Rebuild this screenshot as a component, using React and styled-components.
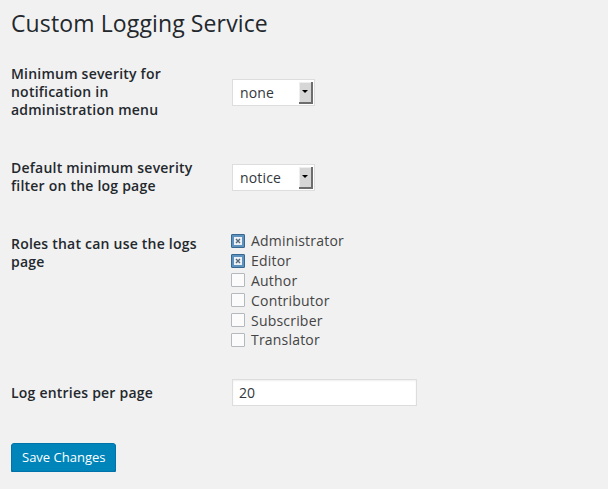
import React from 'react'
import styled, { createGlobalStyle } from 'styled-components'

const Global = createGlobalStyle`
  html, body { margin: 0; background: #f1f1f1; }
  body { font-family: "Open Sans", "Liberation Sans", sans-serif; color: #444; }
`

const Wrap = styled.div`
  padding: 0 11px;
`

const Title = styled.h1`
  margin: 0 0 7px;
  padding-top: 9px;
  font-size: 23px;
  line-height: 29px;
  font-weight: 400;
  letter-spacing: 0.12px;
  color: #23282d;
`

const Row = styled.div`
  display: grid;
  grid-template-columns: 221px 1fr;
`

const Label = styled.div`
  width: 200px;
  padding: 20px 0;
  font-size: 14px;
  line-height: 18px;
  font-weight: 600;
  letter-spacing: 0.22px;
  color: #23282d;
`

const Field = styled.div`
  padding: ${p => (p.$top ? '16px 0 14px' : '15px 0')};
  align-self: ${p => (p.$top ? 'start' : 'center')};
`

const Select = styled.div`
  display: flex;
  width: 83px;
  height: 27px;
  box-sizing: border-box;
  border: 1px solid #ddd;
  background: #fff;
  padding: 1px 1px 1px 0;
`

const SelectText = styled.span`
  flex: 1;
  padding-left: 7px;
  font-size: 14px;
  line-height: 24px;
  letter-spacing: 0.15px;
  color: #32373c;
`

const Arrow = styled.span`
  width: 12px;
  margin-top: 1px;
  background: #d6d6d6;
  border-right: 2px solid #6d6d6d;
  border-bottom: 2px solid #6d6d6d;
  box-shadow: inset 1px 1px 0 #eee;
  display: flex;
  align-items: center;
  justify-content: center;
  &::after {
    content: '';
    border-left: 3px solid transparent;
    border-right: 3px solid transparent;
    border-top: 3px solid #000;
  }
`

const CheckList = styled.div`
  display: flex;
  flex-direction: column;
`

const CheckRow = styled.label`
  display: flex;
  align-items: center;
  gap: 6px;
  height: 19.8px;
  font-size: 14px;
  letter-spacing: 0.2px;
  color: #444;
`

const Box = styled.span`
  width: 14px;
  height: 14px;
  box-sizing: border-box;
  margin-left: -1px;
  border: 1px solid ${p => (p.$on ? '#3a6790' : '#b4b9be')};
  background: ${p => (p.$on ? '#5f93bf' : '#fbfbfb')};
  border-radius: 1px;
  display: flex;
  align-items: center;
  justify-content: center;
`

const Inner = styled.span`
  width: 8px;
  height: 8px;
  background: #eef2f6;
  display: flex;
  align-items: center;
  justify-content: center;
`

const TextInput = styled.input`
  width: 185px;
  height: 27px;
  box-sizing: border-box;
  border: 1px solid #ddd;
  box-shadow: inset 0 1px 2px rgba(0, 0, 0, 0.07);
  background: #fff;
  padding: 0 6px;
  font-family: inherit;
  font-size: 14px;
  color: #32373c;
  outline: none;
`

const Submit = styled.div`
  padding-top: 21px;
`

const Button = styled.button`
  height: 29px;
  padding: 0 10px;
  border: 1px solid #0073aa;
  border-radius: 3px;
  background: #0085ba;
  box-shadow: 0 1px 0 #006799;
  color: #fff;
  font-family: inherit;
  font-size: 13px;
  line-height: 26px;
`

function Check({ on, children }) {
  return (
    <CheckRow>
      <Box $on={on}>
        {on && (
          <Inner>
            <svg width="6" height="6" viewBox="0 0 6 6">
              <path d="M1 1L5 5M5 1L1 5" stroke="#55687a" strokeWidth="1.4" />
            </svg>
          </Inner>
        )}
      </Box>
      {children}
    </CheckRow>
  )
}

function Dropdown({ value }) {
  return (
    <Select>
      <SelectText>{value}</SelectText>
      <Arrow />
    </Select>
  )
}

export default function App() {
  return (
    <Wrap>
      <Global />
      <Title>Custom Logging Service</Title>

      <Row>
        <Label>Minimum severity for notification in administration menu</Label>
        <Field><Dropdown value="none" /></Field>
      </Row>

      <Row>
        <Label>Default minimum severity filter on the log page</Label>
        <Field><Dropdown value="notice" /></Field>
      </Row>

      <Row>
        <Label>Roles that can use the logs page</Label>
        <Field $top>
          <CheckList>
            <Check on>Administrator</Check>
            <Check on>Editor</Check>
            <Check>Author</Check>
            <Check>Contributor</Check>
            <Check>Subscriber</Check>
            <Check>Translator</Check>
          </CheckList>
        </Field>
      </Row>

      <Row>
        <Label>Log entries per page</Label>
        <Field><TextInput defaultValue="20" /></Field>
      </Row>

      <Submit>
        <Button>Save Changes</Button>
      </Submit>
    </Wrap>
  )
}
